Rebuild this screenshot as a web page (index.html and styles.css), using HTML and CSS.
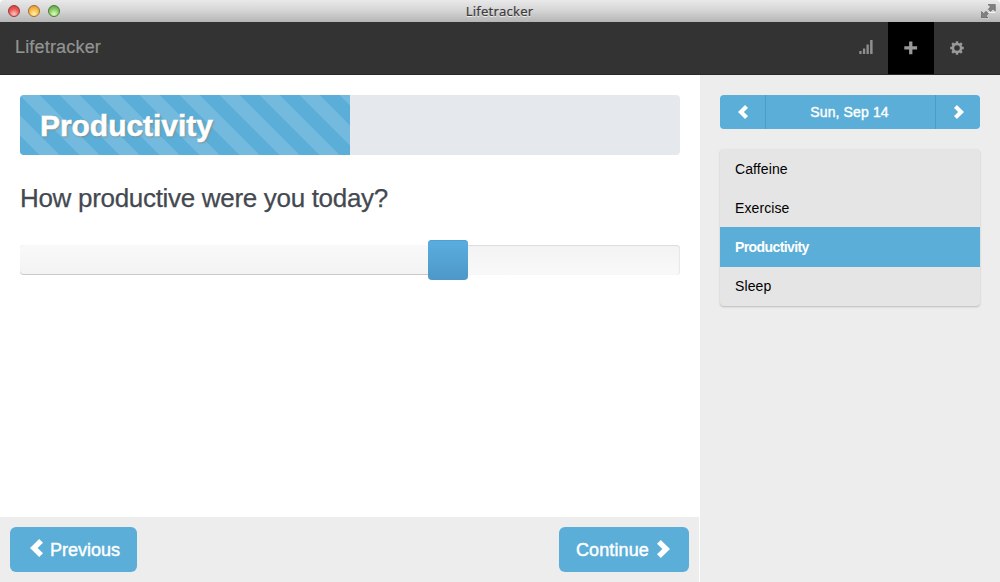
FILE: index.html
```html
<!DOCTYPE html>
<html lang="en">
<head>
<meta charset="utf-8">
<title>Lifetracker</title>
<link rel="stylesheet" href="styles.css">
</head>
<body>
<div class="window">
  <header class="titlebar">
    <div class="lights"><i class="light red"></i><i class="light yellow"></i><i class="light green"></i></div>
    <span class="window-title">Lifetracker</span>
    <svg class="expand" width="15" height="15" viewBox="0 0 15 15"><g fill="none" stroke="#f4f4f4" stroke-width="1"><path d="M.5 14.5h7M7.5 8.500h7"/></g><path fill="#808080" stroke="#606060" stroke-width=".6" d="M7 .5h7.300V7L12 5 9.500 7.500 7.300 5.300 9.500 2.800zM.5 7.500 2.700 9.700 5 7.200 7.300 9.500 5 12l2 2H.5z"/></svg>
  </header>
  <nav class="navbar">
    <a class="brand">Lifetracker</a>
    <div class="nav-items">
      <a class="nav-item signal"><svg width="14" height="14" viewBox="0 0 14 14"><path fill="#8f8f8f" d="M.3 11h2.300v3H.3zM3.900 8.500h2.300V14H3.900zM7.500 4.500h2.300V14H7.500zM11.100 0h2.500v14h-2.500z"/></svg></a>
      <a class="nav-item active"><svg width="14" height="14" viewBox="0 0 14 14"><path fill="#999" d="M5.100.5h3.300v4.700h4.700v3.300H8.400v4.700H5.100V8.500H.3V5.200h4.800z"/></svg></a>
      <a class="nav-item gear"><svg width="14" height="14" viewBox="0 0 14 14"><g fill="none" stroke="#999"><circle cx="7" cy="7" r="4.100" stroke-width="2.600"/><path stroke-width="2.400" d="M7 .2v2.300M7 11.500v2.300M.2 7h2.300M11.500 7h2.300M2.200 2.200 3.800 3.800M10.200 10.200l1.600 1.600M2.200 11.800l1.600-1.600M10.200 3.800l1.600-1.600"/></g></svg></a>
    </div>
  </nav>
  <div class="columns">
    <main class="main">
      <section class="content">
        <div class="progress"><div class="bar"><span class="bar-title">Productivity</span></div></div>
        <h2 class="question">How productive were you today?</h2>
        <div class="slider"><div class="range"></div><div class="handle"></div></div>
      </section>
      <footer class="footer">
        <a class="button previous"><svg width="13" height="18" viewBox="0 0 13 18"><path fill="#fff" d="M9.200 0 13 3.700 7.600 9l5.400 5.300L9.200 18 0 9z"/></svg><span>Previous</span></a>
        <a class="button continue"><span>Continue</span><svg width="13" height="18" viewBox="0 0 13 18"><path fill="#fff" d="M3.800 0 0 3.700 5.400 9 0 14.300 3.800 18 13 9z"/></svg></a>
      </footer>
    </main>
    <aside class="sidebar">
      <div class="date-picker">
        <a class="step back"><svg width="10" height="14" viewBox="0 0 13 18"><path fill="#fff" d="M9.200 0 13 3.700 7.600 9l5.400 5.300L9.200 18 0 9z"/></svg></a>
        <a class="date">Sun, Sep 14</a>
        <a class="step next"><svg width="10" height="14" viewBox="0 0 13 18"><path fill="#fff" d="M3.800 0 0 3.700 5.400 9 0 14.300 3.800 18 13 9z"/></svg></a>
      </div>
      <ul class="list">
        <li>Caffeine</li>
        <li>Exercise</li>
        <li class="selected">Productivity</li>
        <li class="last">Sleep</li>
      </ul>
    </aside>
  </div>
</div>
</body>
</html>
```
FILE: styles.css
```css
* { box-sizing: border-box; }
body { margin: 0; font-family: "Liberation Sans", Arial, sans-serif; background: #fff; }
svg { display: block; }
.window { width: 1000px; height: 582px; display: flex; flex-direction: column; overflow: hidden; }

.titlebar { height: 22px; flex: none; display: grid; grid-template-columns: 1fr auto 1fr; align-items: center; padding: 0 4px 0 8px; background: linear-gradient(#e9e9e9, #d4d4d4 50%, #b5b5b5); border-radius: 4px 4px 0 0; }
.lights { display: flex; gap: 8px; }
.light { width: 12px; height: 12px; border-radius: 50%; border: 1px solid; }
.red { border-color: #963c3a; background: radial-gradient(circle at 50% 80%, #ffc6c0, #ed5653 55%, #ca3936); }
.yellow { border-color: #a36d29; background: radial-gradient(circle at 50% 80%, #fff3a6, #f6b84a 55%, #d88d2c); }
.green { border-color: #4c7c36; background: radial-gradient(circle at 50% 80%, #dcffb5, #86c765 55%, #579443); }
.window-title { margin-right: 5px; font: 13px/20px "Noto Sans", sans-serif; letter-spacing: .25px; color: #3c3c3c; -webkit-text-stroke: .2px #3c3c3c; text-shadow: 0 1px 0 #eee; }
.expand { justify-self: end; }

.navbar { height: 53px; flex: none; display: flex; justify-content: space-between; background: #333; border-bottom: 1px solid #292929; padding-right: 20px; }
.brand { padding-left: 15px; font-size: 18px; line-height: 51px; color: #949494; letter-spacing: .18px; -webkit-text-stroke: .2px #949494; }
.nav-items { display: flex; }
.nav-item { width: 46px; display: flex; align-items: center; justify-content: center; }
.signal { padding: 0 0 2px 1px; }
.gear { padding-bottom: 1px; }
.active { background: #000; }

.columns { flex: 1; display: flex; min-height: 0; }
.main { width: 700px; display: flex; flex-direction: column; }
.content { flex: 1; padding: 20px; }
.progress { height: 60px; border-radius: 4px; background: #e5e8ed; overflow: hidden; }
.bar { width: 50%; height: 100%; padding-left: 20px; background: linear-gradient(45deg, rgba(255,255,255,.15) 25%, transparent 25%, transparent 50%, rgba(255,255,255,.15) 50%, rgba(255,255,255,.15) 75%, transparent 75%) 0 0 / 40px 40px #5aaed8; }
.bar-title { font-size: 30px; font-weight: bold; line-height: 62px; color: #fff; letter-spacing: -.05px; -webkit-text-stroke: .5px #fff; text-shadow: 1px 1px 2px #888; }
.question { margin: 25px 0 0; font-size: 26px; font-weight: normal; line-height: 36px; color: #444951; letter-spacing: -.31px; -webkit-text-stroke: .25px #444951; }
.slider { position: relative; height: 30px; margin-top: 29px; border-radius: 4px; background: linear-gradient(#f3f3f3, #f9f9f9); box-shadow: inset 0 1px 1px #dcdcdc, inset -1px 0 1px #e8e8e8; }
.range { width: 418px; height: 30px; border-radius: 4px; background: linear-gradient(#f9f9f9, #f3f3f3); box-shadow: inset 0 -1px 0 #cbcbcb; }
.handle { position: absolute; left: 408px; top: -5px; width: 40px; height: 40px; border-radius: 4px; background: linear-gradient(#5aaedf, #4d98c8); box-shadow: inset 0 1px 0 #4da1d3; }

.footer { width: 699px; height: 65px; flex: none; display: flex; justify-content: space-between; align-items: flex-start; padding: 10px; background: #ededed; }
.button { height: 45px; display: flex; align-items: center; border-radius: 6px; background: #5aaed8; color: #fff; font-size: 18px; -webkit-text-stroke: .45px #fff; }
.button span { padding-top: 2px; }
.previous { width: 127px; padding-left: 20px; gap: 7px; }
.previous svg { margin-bottom: 3px; }
.continue { width: 130px; padding-left: 17px; gap: 8px; letter-spacing: .1px; }
.continue svg { margin-bottom: 1px; }

.sidebar { width: 300px; padding: 20px; background: #ededed; }
.date-picker { height: 34px; display: flex; border-radius: 4px; overflow: hidden; background: #5aaed8; color: #fff; }
.step { width: 45px; display: flex; align-items: center; justify-content: center; padding: 0 0 1px 1px; }
.next { width: 44px; padding-left: 2px; }
.date { flex: 1; border: solid #499cc7; border-width: 0 1px; text-align: center; font-size: 14px; line-height: 34px; letter-spacing: .13px; padding-right: 2px; -webkit-text-stroke: .4px #fff; }
.list { list-style: none; margin: 20px 0 0; padding: 0; height: 157px; background: #e5e5e5; border-radius: 4px; box-shadow: 0 1px 2px rgba(0,0,0,.22); font-size: 14px; color: #000; letter-spacing: .1px; }
.list li { height: 39px; line-height: 40px; padding-left: 15px; }
.list .selected { height: 40px; background: #5aaed8; color: #fff; font-weight: bold; letter-spacing: -.6px; }
.list .last { line-height: 38px; }
```
